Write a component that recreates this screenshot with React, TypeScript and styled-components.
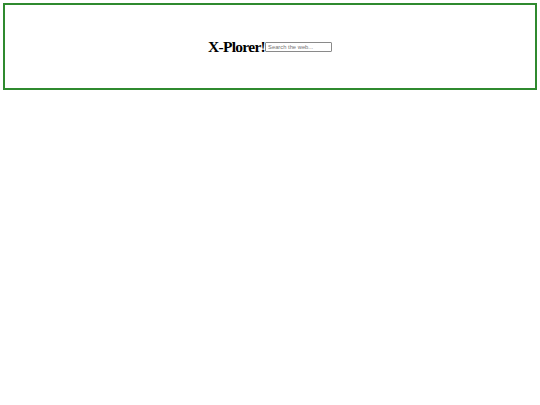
import styled, { createGlobalStyle } from "styled-components";

const GlobalStyle = createGlobalStyle`
  body {
    margin: 3px;
    background: #fff;
    font-family: "Liberation Serif", "Times New Roman", serif;
  }
`;

const Header = styled.header`
  height: 83px;
  border: 2px solid #2f8a2f;
  display: flex;
  justify-content: center;
  align-items: center;
`;

const Title = styled.h1`
  margin: 0;
  font-size: 15.5px;
  letter-spacing: -0.7px;
  font-weight: bold;
  color: #000;
  font-family: "Liberation Serif", "Times New Roman", serif;
`;

const Search = styled.input`
  box-sizing: border-box;
  width: 67px;
  height: 10px;
  padding: 0 2px;
  border: 1px solid #8a8a8a;
  border-radius: 1px;
  font-family: "Liberation Sans", Arial, sans-serif;
  font-size: 5.8px;
  outline: none;

  &::placeholder {
    color: #757575;
  }
`;

function App() {
  return (
    <>
      <GlobalStyle />
      <Header>
        <Title>X-Plorer!</Title>
        <Search type="text" placeholder="Search the web..." />
      </Header>
    </>
  );
}

export default App;
